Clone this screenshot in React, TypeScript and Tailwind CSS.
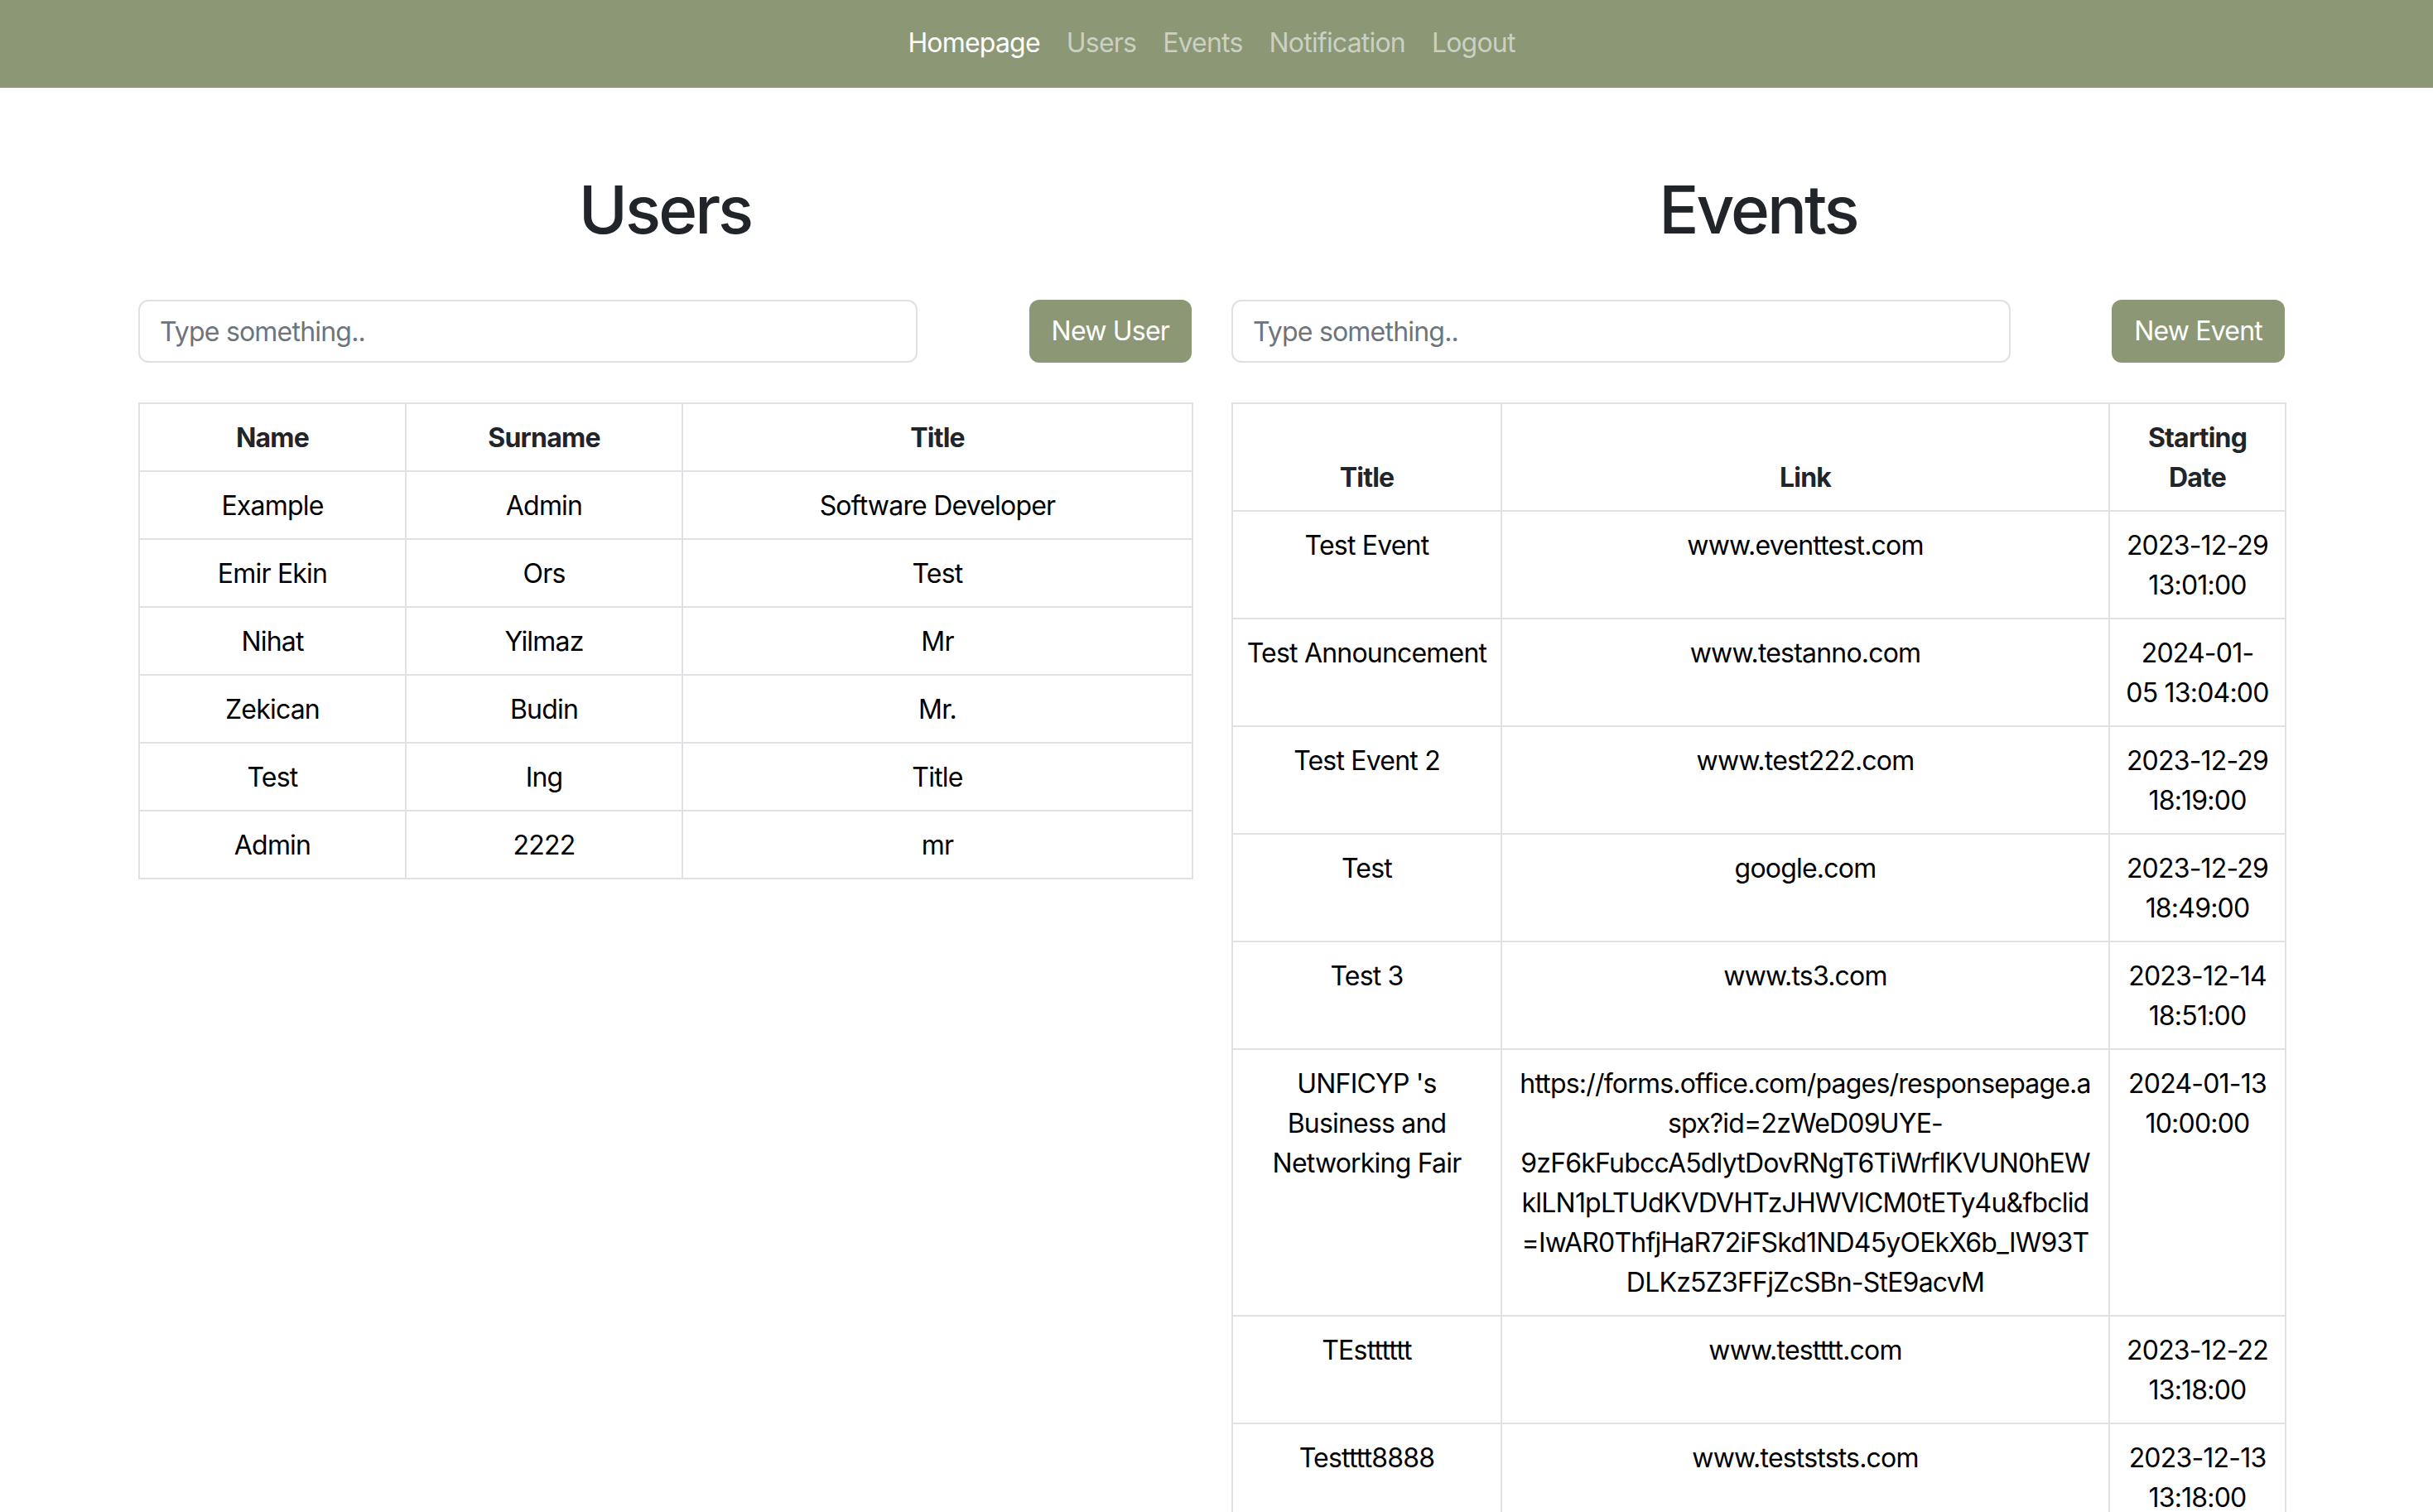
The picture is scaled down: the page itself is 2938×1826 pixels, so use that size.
import React from "react";

const users = [
  ["Example", "Admin", "Software Developer"],
  ["Emir Ekin", "Ors", "Test"],
  ["Nihat", "Yilmaz", "Mr"],
  ["Zekican", "Budin", "Mr."],
  ["Test", "Ing", "Title"],
  ["Admin", "2222", "mr"],
];

const events: { title: string[]; link: string[]; date: string[] }[] = [
  { title: ["Test Event"], link: ["www.eventtest.com"], date: ["2023-12-29", "13:01:00"] },
  { title: ["Test Announcement"], link: ["www.testanno.com"], date: ["2024-01-", "05 13:04:00"] },
  { title: ["Test Event 2"], link: ["www.test222.com"], date: ["2023-12-29", "18:19:00"] },
  { title: ["Test"], link: ["google.com"], date: ["2023-12-29", "18:49:00"] },
  { title: ["Test 3"], link: ["www.ts3.com"], date: ["2023-12-14", "18:51:00"] },
  {
    title: ["UNFICYP 's", "Business and", "Networking Fair"],
    link: [
      "https://forms.office.com/pages/responsepage.a",
      "spx?id=2zWeD09UYE-",
      "9zF6kFubccA5dlytDovRNgT6TiWrflKVUN0hEW",
      "klLN1pLTUdKVDVHTzJHWVlCM0tETy4u&fbclid",
      "=IwAR0ThfjHaR72iFSkd1ND45yOEkX6b_IW93T",
      "DLKz5Z3FFjZcSBn-StE9acvM",
    ],
    date: ["2024-01-13", "10:00:00"],
  },
  { title: ["TEstttttt"], link: ["www.testttt.com"], date: ["2023-12-22", "13:18:00"] },
  { title: ["Testttt8888"], link: ["www.testststs.com"], date: ["2023-12-13", "13:18:00"] },
];

function Lines({ lines }: { lines: string[] }) {
  return (
    <>
      {lines.map((l, i) => (
        <div key={i} className="whitespace-nowrap">
          {l}
        </div>
      ))}
    </>
  );
}

function Controls({ label }: { label: string }) {
  return (
    <div className="flex items-center justify-between">
      <input
        type="text"
        placeholder="Type something.."
        className="w-[941px] h-[76px] px-[24px] border-2 border-[#dee2e6] rounded-[12px] text-[32px] leading-[48px] tracking-[-0.8px] text-[#212529] placeholder:text-[#6c757d] outline-none"
      />
      <button className="h-[76px] px-[27px] rounded-[12px] bg-[#8c9775] text-white text-[32px] leading-[48px] tracking-[-0.8px]">
        {label}
      </button>
    </div>
  );
}

const cell =
  "border-2 border-[#dee2e6] px-[16px] pt-[17px] pb-[15px] text-[32px] leading-[48px] tracking-[-0.8px] text-center";

export default function App() {
  return (
    <div className="min-h-screen bg-white font-['Inter','Liberation_Sans',sans-serif] text-[#212529]">
      <nav className="h-[106px] bg-[#8c9775]">
        <div className="ml-[167px] w-[2592px] flex justify-center pt-[28px]">
          {[
            ["Homepage", true],
            ["Users", false],
            ["Events", false],
            ["Notification", false],
            ["Logout", false],
          ].map(([t, active]) => (
            <a
              key={t as string}
              className={
                "px-[16px] text-[32px] leading-[48px] tracking-[-0.8px] " +
                (active ? "text-white" : "text-[#cbd0c0]")
              }
            >
              {t as string}
            </a>
          ))}
        </div>
      </nav>

      <main className="ml-[167px] w-[2592px] grid grid-cols-2 gap-[48px] pt-[99px]">
        <section>
          <h1 className="text-center text-[80px] leading-[96px] font-medium tracking-[-3px] text-[#212529]">
            Users
          </h1>
          <div className="mt-[61px]">
            <Controls label="New User" />
          </div>
          <table className="mt-[48px] w-full table-fixed border-collapse">
            <colgroup>
              <col className="w-[322px]" />
              <col className="w-[334px]" />
              <col className="w-[616px]" />
            </colgroup>
            <thead>
              <tr>
                <th className={cell + " font-bold text-[#212529]"}>Name</th>
                <th className={cell + " font-bold text-[#212529]"}>Surname</th>
                <th className={cell + " font-bold text-[#212529]"}>Title</th>
              </tr>
            </thead>
            <tbody>
              {users.map((r, i) => (
                <tr key={i}>
                  {r.map((c, j) => (
                    <td key={j} className={cell + " text-black"}>
                      {c}
                    </td>
                  ))}
                </tr>
              ))}
            </tbody>
          </table>
        </section>

        <section>
          <h1 className="text-center text-[80px] leading-[96px] font-medium tracking-[-3px] text-[#212529]">
            Events
          </h1>
          <div className="mt-[61px]">
            <Controls label="New Event" />
          </div>
          <table className="mt-[48px] w-full table-fixed border-collapse">
            <colgroup>
              <col className="w-[325px]" />
              <col className="w-[734px]" />
              <col className="w-[213px]" />
            </colgroup>
            <thead>
              <tr>
                <th className={cell + " font-bold align-bottom text-[#212529]"}>Title</th>
                <th className={cell + " font-bold align-bottom text-[#212529]"}>Link</th>
                <th className={cell + " font-bold align-bottom text-[#212529]"}>
                  <Lines lines={["Starting", "Date"]} />
                </th>
              </tr>
            </thead>
            <tbody>
              {events.map((e, i) => (
                <tr key={i}>
                  <td className={cell + " align-top text-black"}>
                    <Lines lines={e.title} />
                  </td>
                  <td className={cell + " align-top text-black"}>
                    <Lines lines={e.link} />
                  </td>
                  <td className={cell + " align-top text-black"}>
                    <Lines lines={e.date} />
                  </td>
                </tr>
              ))}
            </tbody>
          </table>
        </section>
      </main>
    </div>
  );
}
